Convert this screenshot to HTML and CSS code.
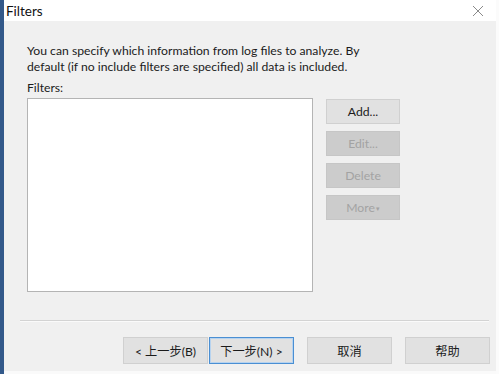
FILE: index.html
```html
<!DOCTYPE html>
<html lang="en">
<head>
    <meta charset="UTF-8">
    <title>Filters</title>
    <link rel="stylesheet" href="styles.css">
</head>
<body>
    <div class="edge"></div>
    <div class="dialog">
        <div class="titlebar">
            <span class="title">Filters</span>
            <svg class="close" width="12" height="12" viewBox="0 0 12 12">
                <path d="M1 1 L11 11 M11 1 L1 11" stroke="#8a8a8a" stroke-width="1" fill="none"/>
            </svg>
        </div>
        <div class="content">
            <p class="intro">You can specify which information from log files to analyze. By<br>default (if no include filters are specified) all data is included.</p>
            <div class="label">Filters:</div>
            <div class="filters">
                <div class="list"></div>
                <div class="side-buttons">
                    <button class="btn">Add...</button>
                    <button class="btn disabled">Edit...</button>
                    <button class="btn disabled">Delete</button>
                    <button class="btn disabled">More<span class="arrow">&#9662;</span></button>
                </div>
            </div>
            <div class="separator"></div>
            <div class="footer">
                <div class="nav">
                    <button class="btn wide">&lt; 上一步(B)</button>
                    <button class="btn wide default">下一步(N) &gt;</button>
                </div>
                <button class="btn wide">取消</button>
                <button class="btn wide">帮助</button>
            </div>
        </div>
    </div>
</body>
</html>
```

FILE: styles.css
```css
body {
    margin: 0;
    width: 499px;
    height: 374px;
    display: flex;
    overflow: hidden;
    font-family: Lato, "Noto Sans CJK SC", sans-serif;
    font-size: 12.2px;
    color: #1b1b1b;
    background: #ffffff;
}

.edge {
    width: 4px;
    background-color: #33598a;
}

.dialog {
    flex: 1;
    display: flex;
    flex-direction: column;
    border-right: 3px solid #fbfbfb;
}

.titlebar {
    height: 21px;
    display: flex;
    align-items: center;
    justify-content: space-between;
    padding: 0 12px 0 2px;
    background: #ffffff;
}

.title {
    font-size: 13.5px;
    color: #111;
}

.content {
    flex: 1;
    background-color: #f0f0f0;
    padding: 22px 0 0 23px;
    border-bottom: 3px solid #fafafa;
}

.intro {
    margin: 0;
    line-height: 16px;
    white-space: nowrap;
}

.label {
    margin-top: 5px;
    line-height: 15px;
}

.filters {
    display: flex;
    margin-top: 3px;
    gap: 13px;
}

.list {
    width: 284px;
    height: 192px;
    background: #ffffff;
    border: 1px solid #b4b4b4;
}

.side-buttons {
    display: flex;
    flex-direction: column;
    gap: 7px;
    margin-top: 1px;
}

.btn {
    width: 74px;
    height: 25px;
    padding: 0;
    font-family: inherit;
    font-size: 12.2px;
    color: #1b1b1b;
    background-color: #e1e1e1;
    border: 1px solid #d0d0d0;
}

.btn.disabled {
    color: #a3a3a3;
    background-color: #cccccc;
    border-color: #c6c6c6;
}

.arrow {
    font-size: 7px;
    margin-left: 1px;
    vertical-align: middle;
}

.separator {
    height: 1px;
    margin: 28px 7px 0 -7px;
    background: #d3d3d3;
    border-bottom: 1px solid #fafafa;
}

.footer {
    display: flex;
    margin-top: 15px;
    padding-left: 96px;
    gap: 13px;
}

.nav {
    display: flex;
    gap: 1px;
}

.btn.wide {
    width: 85px;
    height: 27px;
}

.btn.default {
    border: 1px solid #4a8fd3;
    box-shadow: inset 0 0 0 1px #b7d3ef;
}
```
